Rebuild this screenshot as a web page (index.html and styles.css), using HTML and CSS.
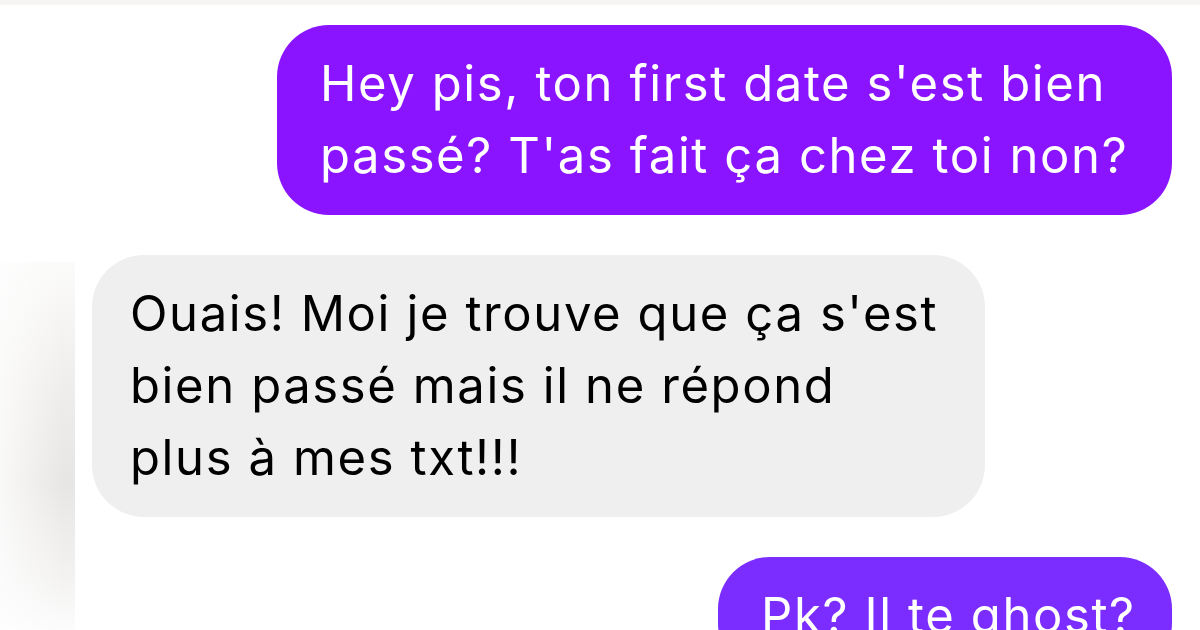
FILE: index.html
```html
<!DOCTYPE html>
<html lang="fr">
<head>
    <meta charset="UTF-8">
    <meta name="viewport" content="width=device-width, initial-scale=1.0">
    <title>Conversation</title>
    <link rel="stylesheet" href="styles.css">
</head>
<body>
    <div class="thread">
        <div class="bubble sent first">
            Hey pis, ton first date s'est bien<br>passé? T'as fait ça chez toi non?
        </div>
        <div class="bubble received">
            Ouais! Moi je trouve que ça s'est<br>bien passé mais il ne répond<br>plus à mes txt!!!
        </div>
        <div class="bubble sent last">
            Pk? Il te ghost?
        </div>
    </div>
</body>
</html>
```

FILE: styles.css
```css
body {
    margin: 0;
    padding: 0;
    width: 1200px;
    height: 630px;
    overflow: hidden;
    font-family: Inter, "Liberation Sans", Arial, sans-serif;
    background-color: #fff;
    background-image:
        linear-gradient(to right, rgba(255, 255, 255, 0.75) 0%, rgba(255, 255, 255, 0) 85%),
        linear-gradient(to bottom, #fbfbfa 0%, #efedeb 35%, #e8e6e4 60%, #f3f2f1 85%, #fcfcfc 100%),
        linear-gradient(to right, #f6f5f3, #f6f5f3);
    background-size: 75px 368px, 75px 368px, 1200px 5px;
    background-position: 0 262px, 0 262px, 0 0;
    background-repeat: no-repeat;
}

.thread {
    display: flex;
    flex-direction: column;
    gap: 40px;
    padding: 25px 28px 0 92px;
}

.bubble {
    box-sizing: border-box;
    font-size: 49px;
    line-height: 72px;
    letter-spacing: 1.6px;
    padding: 23px 40px 23px 43px;
    border-radius: 52px;
}

.sent {
    align-self: flex-end;
    color: #fff;
}

.sent.first {
    width: 895px;
    background-color: #8a14ff;
}

.sent.last {
    width: 454px;
    white-space: nowrap;
    background-color: #7b2cff;
}

.received {
    align-self: flex-start;
    width: 893px;
    padding-left: 38px;
    color: #000;
    background-color: #efefef;
}
```
